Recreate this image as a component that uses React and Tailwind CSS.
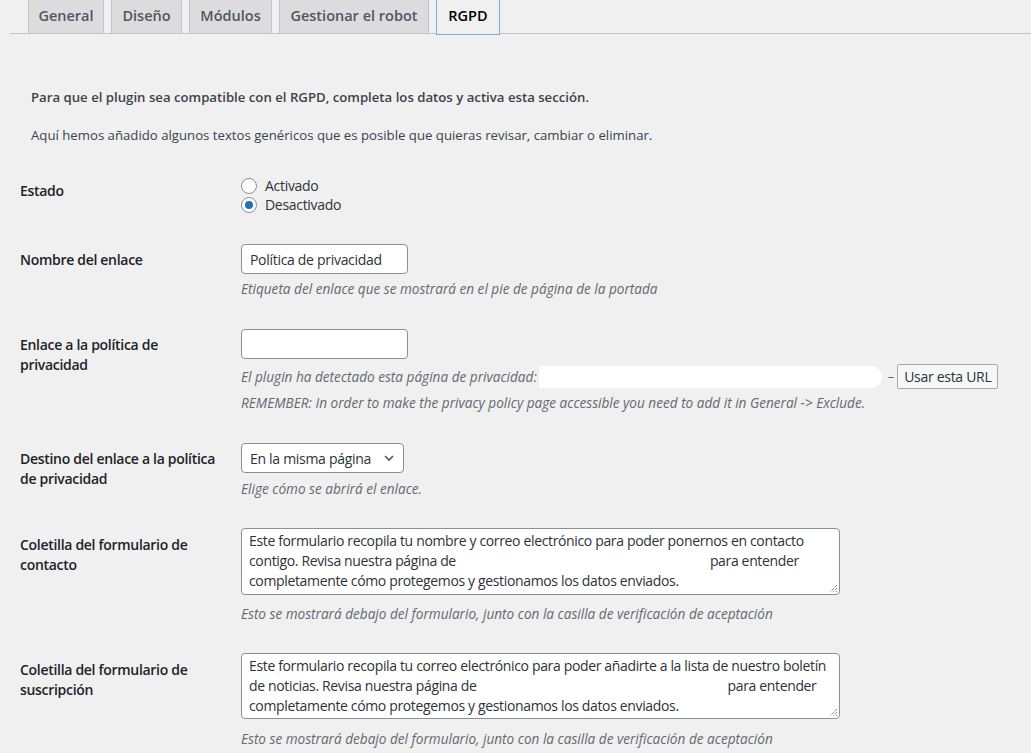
import React from "react";

const font = { fontFamily: '"Open Sans", "Liberation Sans", sans-serif' };

const tabs = [
  { label: "General", w: "w-[76px]" },
  { label: "Diseño", w: "w-[71px]" },
  { label: "Módulos", w: "w-[83px]" },
  { label: "Gestionar el robot", w: "w-[150px]" },
];

function Tabs() {
  return (
    <div className="ml-[10px] flex h-[34px] gap-[7px] border-b border-[#c3c4c7] pl-[18px]">
      {tabs.map((t) => (
        <div
          key={t.label}
          className={`${t.w} -mt-[4px] flex h-[38px] items-center justify-center whitespace-nowrap border border-[#c3c4c7] bg-[#dcdcde] pt-[2px] text-[14.5px] font-semibold text-[#50575e]`}
        >
          {t.label}
        </div>
      ))}
      <div className="-mt-[4px] flex h-[39px] w-[64px] items-center justify-center border border-[#72aee6] bg-[#f0f0f1] pt-[1px] text-[14.5px] font-semibold text-black">
        RGPD
      </div>
    </div>
  );
}

function Row({ label, children }) {
  return (
    <div className="flex">
      <div className="w-[241px] shrink-0 pl-[20px] pr-[21px] pt-[36px] text-[14px] font-semibold leading-[20px] tracking-[-0.3px] text-[#1d2327]">
        {label}
      </div>
      <div className="pt-[30px]">{children}</div>
    </div>
  );
}

function Desc({ children, className = "" }) {
  return (
    <p className={`whitespace-nowrap text-[13.6px] italic leading-[20px] text-[#646970] ${className}`}>
      {children}
    </p>
  );
}

function Radio({ checked, label }) {
  return (
    <label className="flex h-[19px] items-center gap-[8px] text-[14px] tracking-[-0.3px] text-[#2c3338]">
      <span className="flex h-[16px] w-[16px] items-center justify-center rounded-full border border-[#8c8f94] bg-white">
        {checked && <span className="h-[8px] w-[8px] rounded-full bg-[#2271b1]" />}
      </span>
      {label}
    </label>
  );
}

function ResizeHandle() {
  return (
    <svg className="absolute bottom-[1px] right-[1px]" width="9" height="9" viewBox="0 0 9 9">
      <path d="M8 1 L1 8 M8 4 L4 8 M8 7 L7 8" stroke="#555" strokeWidth="1" strokeDasharray="1 1" />
    </svg>
  );
}

function FakeTextarea({ lines, h = "h-[67px]" }) {
  return (
    <div className={`relative -mt-[1px] ${h} w-[599px] rounded-[4px] border border-[#8c8f94] bg-white px-[7px] pt-[2px] text-[14px] leading-[20px] tracking-[-0.35px] text-[#2c3338]`}>
      {lines.map((l, i) => (
        <div key={i} className="whitespace-nowrap">
          {l}
        </div>
      ))}
      <ResizeHandle />
    </div>
  );
}

export default function App() {
  return (
    <div className="min-h-[753px] bg-[#f0f0f1] pb-[10px]" style={font}>
      <Tabs />

      <p className="mt-[53px] pl-[31px] text-[13.2px] font-semibold leading-[20px] text-[#3c434a]">
        Para que el plugin sea compatible con el RGPD, completa los datos y activa esta sección.
      </p>
      <p className="mt-[18px] pl-[31px] text-[13.2px] leading-[20px] text-[#3c434a]">
        Aquí hemos añadido algunos textos genéricos que es posible que quieras revisar, cambiar o eliminar.
      </p>

      <Row label="Estado">
        <div className="pt-[1px]">
          <Radio label="Activado" />
          <Radio checked label="Desactivado" />
        </div>
      </Row>

      <Row label="Nombre del enlace">
        <div className="flex h-[30px] w-[167px] items-center rounded-[4px] border border-[#8c8f94] bg-white px-[8px] text-[14px] tracking-[-0.3px] text-[#2c3338]">
          Política de privacidad
        </div>
        <Desc className="mt-[5px]">Etiqueta del enlace que se mostrará en el pie de página de la portada</Desc>
      </Row>

      <Row label="Enlace a la política de privacidad">
        <div className="h-[30px] w-[167px] rounded-[4px] border border-[#8c8f94] bg-white" />
        <div className="mt-[5px] flex h-[25px] items-center">
          <Desc>El plugin ha detectado esta página de privacidad:</Desc>
          <span className="ml-[2px] h-[22px] w-[343px] rounded-r-full bg-white" />
          <span className="ml-[6px] text-[13px] text-[#646970]">–</span>
          <button className="ml-[3px] flex h-[25px] w-[101px] items-center justify-center rounded-[2px] border border-[#a7aaad] bg-[#f6f7f7] text-[14px] tracking-[-0.3px] text-[#2c3338]">
            Usar esta URL
          </button>
        </div>
        <Desc className="mt-[4px]">
          REMEMBER: In order to make the privacy policy page accessible you need to add it in General -&gt; Exclude.
        </Desc>
      </Row>

      <Row label="Destino del enlace a la política de privacidad">
        <div className="flex h-[30px] w-[163px] items-center justify-between rounded-[4px] border border-[#8c8f94] bg-white pl-[8px] pr-[6px] text-[14px] tracking-[-0.3px] text-[#2c3338]">
          <span>En la misma página</span>
          <svg width="16" height="16" viewBox="0 0 16 16">
            <path d="M4 6 L8 10 L12 6" fill="none" stroke="#50575e" strokeWidth="1.6" />
          </svg>
        </div>
        <Desc className="mt-[6px]">Elige cómo se abrirá el enlace.</Desc>
      </Row>

      <Row label="Coletilla del formulario de contacto">
        <FakeTextarea
          lines={[
            "Este formulario recopila tu nombre y correo electrónico para poder ponernos en contacto",
            <>
              contigo. Revisa nuestra página de<span className="inline-block w-[254px]" />para entender
            </>,
            "completamente cómo protegemos y gestionamos los datos enviados.",
          ]}
        />
        <Desc className="mt-[9px]">
          Esto se mostrará debajo del formulario, junto con la casilla de verificación de aceptación
        </Desc>
      </Row>

      <Row label="Coletilla del formulario de suscripción">
        <FakeTextarea
          h="h-[66px]"
          lines={[
            "Este formulario recopila tu correo electrónico para poder añadirte a la lista de nuestro boletín",
            <>
              de noticias. Revisa nuestra página de<span className="inline-block w-[251px]" />para entender
            </>,
            "completamente cómo protegemos y gestionamos los datos enviados.",
          ]}
        />
        <Desc className="mt-[10px]">
          Esto se mostrará debajo del formulario, junto con la casilla de verificación de aceptación
        </Desc>
      </Row>
    </div>
  );
}
